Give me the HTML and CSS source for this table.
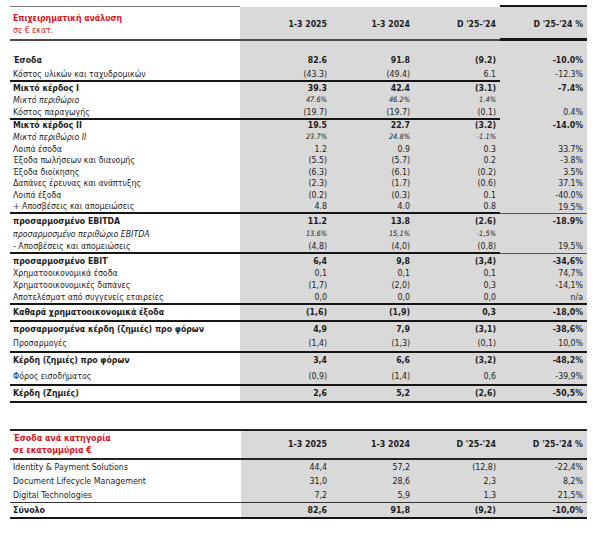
FILE: index.html
```html
<!DOCTYPE html>
<html lang="el">
<head>
<meta charset="utf-8">
<title>Επιχειρηματική ανάλυση</title>
<link rel="stylesheet" href="styles.css">
</head>
<body>
<div class="page">
  <div class="tbl main">
    <div class="row head">
      <div class="lbl"><span class="t1">Επιχειρηματική ανάλυση</span><span class="t2">σε € εκατ.</span></div>
      <div>1-3 2025</div><div>1-3 2024</div><div>D '25-'24</div><div>D '25-'24 %</div>
    </div>
    <div class="row h11"><div></div><div></div><div></div><div></div><div></div></div>
    <div class="row h16 b"><div>Έσοδα</div><div>82.6</div><div>91.8</div><div>(9.2)</div><div>-10.0%</div></div>
    <div class="row h14 line part"><div>Κόστος υλικών και ταχυδρομικών</div><div>(43.3)</div><div>(49.4)</div><div>6.1</div><div>-12.3%</div></div>
    <div class="row h12 b"><div>Μικτό κέρδος I</div><div>39.3</div><div>42.4</div><div>(3.1)</div><div>-7.4%</div></div>
    <div class="row h12 it"><div>Μικτό περιθώριο</div><div>47.6%</div><div>46.2%</div><div>1.4%</div><div></div></div>
    <div class="row h14 line part"><div>Κόστος παραγωγής</div><div>(19.7)</div><div>(19.7)</div><div>(0.1)</div><div>0.4%</div></div>
    <div class="row h11 b"><div>Μικτό κέρδος II</div><div>19.5</div><div>22.7</div><div>(3.2)</div><div>-14.0%</div></div>
    <div class="row h12 it"><div>Μικτό περιθώριο II</div><div>23.7%</div><div>24.8%</div><div>-1.1%</div><div></div></div>
    <div class="row h12"><div>Λοιπά έσοδα</div><div>1.2</div><div>0.9</div><div>0.3</div><div>33.7%</div></div>
    <div class="row h11"><div>Έξοδα πωλήσεων και διανομής</div><div>(5.5)</div><div>(5.7)</div><div>0.2</div><div>-3.8%</div></div>
    <div class="row h12"><div>Έξοδα διοίκησης</div><div>(6.3)</div><div>(6.1)</div><div>(0.2)</div><div>3.5%</div></div>
    <div class="row h11"><div>Δαπάνες έρευνας και ανάπτυξης</div><div>(2.3)</div><div>(1.7)</div><div>(0.6)</div><div>37.1%</div></div>
    <div class="row h12"><div>Λοιπά έξοδα</div><div>(0.2)</div><div>(0.3)</div><div>0.1</div><div>-40.0%</div></div>
    <div class="row h13 line thin"><div>+ Αποσβέσεις και απομειώσεις</div><div>4.8</div><div>4.0</div><div>0.8</div><div>19.5%</div></div>
    <div class="row h14 b"><div>προσαρμοσμένο EBITDA</div><div>11.2</div><div>13.8</div><div>(2.6)</div><div>-18.9%</div></div>
    <div class="row h12 it"><div>προσαρμοσμένο περιθώριο EBITDA</div><div>13,6%</div><div>15,1%</div><div>-1,5%</div><div></div></div>
    <div class="row h14 line thin"><div>- Αποσβέσεις και απομειώσεις</div><div>(4,8)</div><div>(4,0)</div><div>(0,8)</div><div>19,5%</div></div>
    <div class="row h14 b"><div>προσαρμοσμένο EBIT</div><div>6,4</div><div>9,8</div><div>(3,4)</div><div>-34,6%</div></div>
    <div class="row h11"><div>Χρηματοοικονομικά έσοδα</div><div>0,1</div><div>0,1</div><div>0,1</div><div>74,7%</div></div>
    <div class="row h12"><div>Χρηματοοικονομικές δαπάνες</div><div>(1,7)</div><div>(2,0)</div><div>0,3</div><div>-14,1%</div></div>
    <div class="row h14 line"><div>Αποτελέσματ από συγγενείς εταιρείες</div><div>0,0</div><div>0,0</div><div>0,0</div><div>n/a</div></div>
    <div class="row h17 line b"><div>Καθαρά χρηματοοικονομικά έξοδα</div><div>(1,6)</div><div>(1,9)</div><div>0,3</div><div>-18,0%</div></div>
    <div class="row h14 b"><div>προσαρμοσμένα κέρδη (ζημιές) προ φόρων</div><div>4,9</div><div>7,9</div><div>(3,1)</div><div>-38,6%</div></div>
    <div class="row h17 line"><div>Προσαρμογές</div><div>(1,4)</div><div>(1,3)</div><div>(0,1)</div><div>10,0%</div></div>
    <div class="row h15 b"><div>Κέρδη (ζημιές) προ φόρων</div><div>3,4</div><div>6,6</div><div>(3,2)</div><div>-48,2%</div></div>
    <div class="row h18 line"><div>Φόρος εισοδήματος</div><div>(0,9)</div><div>(1,4)</div><div>0,6</div><div>-39,9%</div></div>
    <div class="row h17 line b"><div>Κέρδη (Ζημιές)</div><div>2,6</div><div>5,2</div><div>(2,6)</div><div>-50,5%</div></div>
  </div>

  <div class="tbl cat">
    <div class="row head2">
      <div class="lbl"><span class="t1">Έσοδα ανά κατηγορία</span><span class="t1">σε εκατομμύρια €</span></div>
      <div>1-3 2025</div><div>1-3 2024</div><div>D '25-'24</div><div>D '25-'24 %</div>
    </div>
    <div class="row h14"><div>Identity &amp; Payment Solutions</div><div>44,4</div><div>57,2</div><div>(12,8)</div><div>-22,4%</div></div>
    <div class="row h14"><div>Document Lifecycle Management</div><div>31,0</div><div>28,6</div><div>2,3</div><div>8,2%</div></div>
    <div class="row h15 line1"><div>Digital Technologies</div><div>7,2</div><div>5,9</div><div>1,3</div><div>21,5%</div></div>
    <div class="row h16 line b"><div>Σύνολο</div><div>82,6</div><div>91,8</div><div>(9,2)</div><div>-10,0%</div></div>
  </div>
</div>
</body>
</html>
```
FILE: styles.css
```css
body {
  margin: 0;
  background: #fff;
  color: #1c1c1c;
  font-family: "DejaVu Sans Condensed", "DejaVu Sans", sans-serif;
  font-stretch: condensed;
  font-size: 8.7px;
}

.page {
  padding: 5px 0 0 10px;
}

.tbl {
  width: 577px;
}

.cat {
  margin-top: 26px;
  font-size: 8.8px;
}

.row {
  display: grid;
  grid-template-columns: 230px 91px 83px 86px 87px;
}

.cat .row {
  grid-template-columns: 231px 90px 83px 86px 87px;
}

.row > div {
  box-sizing: border-box;
  display: flex;
  align-items: center;
  justify-content: flex-end;
  padding-right: 4px;
  background: #d9d9d9;
  white-space: nowrap;
  line-height: 1;
}

.row > div:first-child {
  justify-content: flex-start;
  padding-left: 3px;
  padding-right: 0;
  background: #fff;
}

.h11 { height: 11px; }
.h12 { height: 12px; }
.h13 { height: 13px; }
.h14 { height: 14px; }
.h15 { height: 15px; }
.h16 { height: 16px; }
.h17 { height: 17px; }
.h18 { height: 18px; }

.b { font-weight: bold; }

.it > div {
  font-style: italic;
}

.it > div:not(:first-child) {
  font-size: 7.4px;
}

.line > div {
  border-bottom: 2px solid #151515;
}

.line.part > div:last-child {
  border-bottom-color: transparent;
}

.line.thin > div:last-child {
  border-bottom: 1px solid #555;
}

.line1 > div {
  border-bottom: 1px solid #333;
}

/* header rows */
.head {
  height: 36px;
  font-weight: bold;
}

.head > div {
  border-top: 2px solid #fff;
  border-bottom: 2px solid #4a4a4a;
  padding-top: 3px;
}

.head > div:first-child {
  border-top: 1px solid #7a7a7a;
  margin-top: 1px;
  padding-top: 3px;
}

.head > div:last-child {
  border-top-color: #151515;
  border-bottom: 3px solid #151515;
}

.head2 {
  height: 31px;
  font-weight: bold;
}

.head2 > div {
  border-top: 2px solid #222;
  border-bottom: 2px solid #222;
}

.lbl {
  flex-direction: column;
  align-items: flex-start !important;
  justify-content: center !important;
  gap: 3px;
}

.t1 {
  color: #d9141e;
  font-weight: bold;
}

.t2 {
  color: #d9141e;
  font-weight: normal;
}
```
